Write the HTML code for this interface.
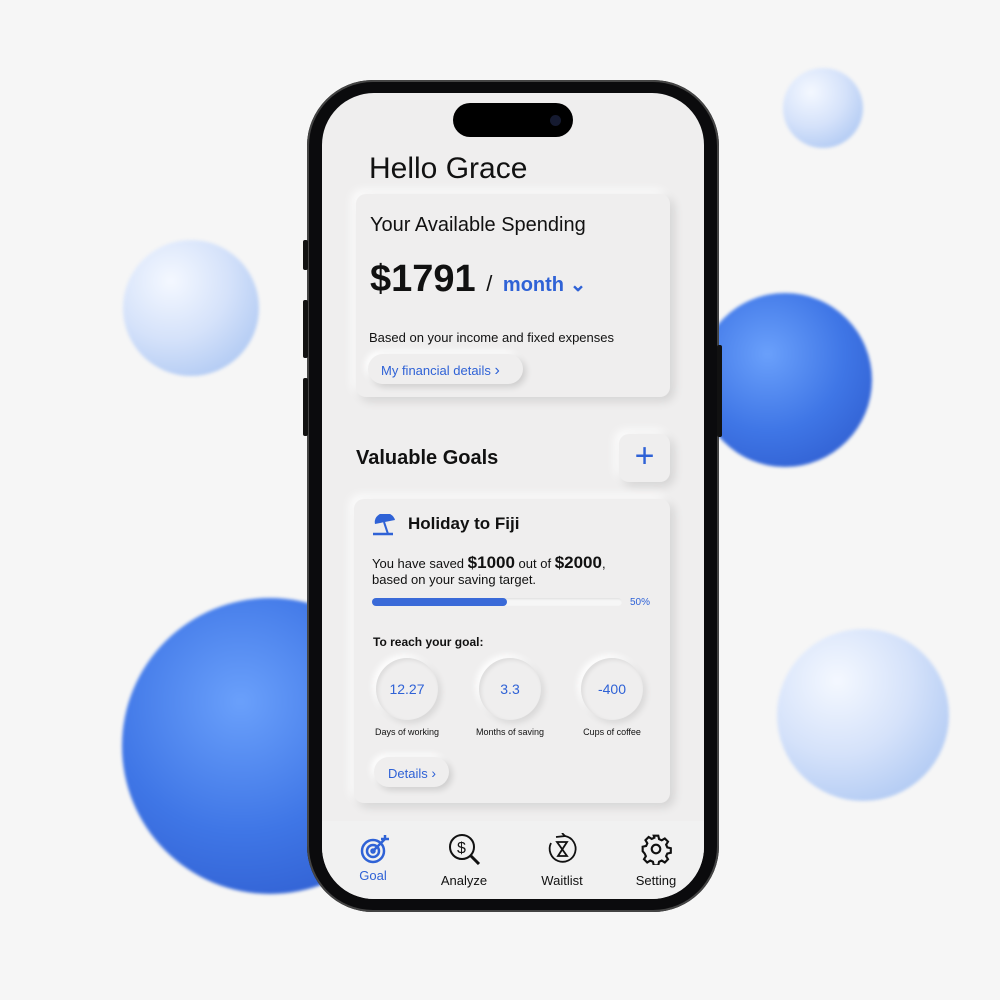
<!DOCTYPE html>
<html><head><style>
*{margin:0;padding:0;box-sizing:border-box}
body{width:1000px;height:1000px;background:#f6f6f6;position:relative;overflow:hidden;font-family:"Liberation Sans",sans-serif;color:#111}
.sp{position:absolute;border-radius:50%;filter:blur(1.5px)}
.lt{background:radial-gradient(circle at 35% 30%,#f4f8ff 0%,#d5e2fa 45%,#9fbef0 100%)}
.bl{background:radial-gradient(circle at 40% 35%,#6aa0fb 0%,#3f76e6 50%,#2a55c8 100%)}
.phone{position:absolute;left:307px;top:80px;width:412px;height:832px;border-radius:66px;background:#0b0b0d;box-shadow:0 0 0 2px #444 inset}
.screen{position:absolute;left:322px;top:93px;width:382px;height:806px;border-radius:52px;background:#efeeee;overflow:hidden}
.island{position:absolute;left:131px;top:10px;width:120px;height:34px;border-radius:17px;background:#000}
.card{position:absolute;background:#efeeee;border-radius:10px;box-shadow:4px 4px 10px rgba(0,0,0,.12),-4px -4px 10px rgba(255,255,255,.9)}
.btn{position:absolute;border-radius:16px;background:#efeeee;box-shadow:3px 3px 7px rgba(0,0,0,.14),-3px -3px 7px #fff;color:#2f62d6;font-size:13px}
.blue{color:#2f62d6}
.circ{position:absolute;width:62px;height:62px;border-radius:50%;box-shadow:inset 2px 2px 4px rgba(0,0,0,.08),3px 3px 7px rgba(0,0,0,.10),-3px -3px 7px #fff;display:flex;align-items:center;justify-content:center;color:#2f62d6;font-size:14px}
.lbl{position:absolute;font-size:9px;width:100px;text-align:center}
.nav{position:absolute;left:0;top:728px;width:382px;height:78px;background:#f1f1f1}
.ni{position:absolute;top:52px;font-size:13px;text-align:center;width:80px}
</style></head><body>
<div class="sp lt" style="left:783px;top:68px;width:80px;height:80px"></div>
<div class="sp lt" style="left:123px;top:240px;width:136px;height:136px"></div>
<div class="sp bl" style="left:698px;top:293px;width:174px;height:174px"></div>
<div class="sp bl" style="left:122px;top:598px;width:296px;height:296px"></div>
<div class="sp lt" style="left:777px;top:629px;width:172px;height:172px"></div>
<div class="phone"></div>
<div style="position:absolute;left:303px;top:240px;width:5px;height:30px;background:#111;border-radius:2px"></div>
<div style="position:absolute;left:303px;top:300px;width:5px;height:58px;background:#111;border-radius:2px"></div>
<div style="position:absolute;left:303px;top:378px;width:5px;height:58px;background:#111;border-radius:2px"></div>
<div style="position:absolute;left:717px;top:345px;width:5px;height:92px;background:#111;border-radius:2px"></div>
<div class="screen">
<div class="island"><div style="position:absolute;right:12px;top:12px;width:11px;height:11px;border-radius:50%;background:#151a30"></div></div>
<div style="position:absolute;left:47px;top:59px;font-size:30px">Hello Grace</div>
<div class="card" style="left:34px;top:101px;width:314px;height:203px">
<div style="position:absolute;left:14px;top:20px;font-size:20px">Your Available Spending</div>
<div style="position:absolute;left:14px;top:64px;font-size:38px;font-weight:bold">$1791 <span style="font-size:22px;font-weight:normal">/</span> <span class="blue" style="font-size:20px;font-weight:bold">month ⌄</span></div>
<div style="position:absolute;left:13px;top:136px;font-size:13px">Based on your income and fixed expenses</div>
<div class="btn" style="left:12px;top:160px;width:155px;height:30px;padding:8px 0 0 13px">My financial details <span style="font-size:16px">›</span></div>
</div>
<div style="position:absolute;left:34px;top:354px;font-size:20px;font-weight:bold">Valuable Goals</div>
<div class="card" style="left:297px;top:341px;width:51px;height:48px;text-align:center;font-size:34px;line-height:44px;color:#2f62d6">+</div>
<div class="card" style="left:32px;top:406px;width:316px;height:304px">
<svg style="position:absolute;left:18px;top:15px" width="28" height="22" viewBox="0 0 28 22"><path d="M3 10 A10 9 0 0 1 23 6 Z" fill="#2f62d6"/><path d="M12 8 L16 20" stroke="#2f62d6" stroke-width="2"/><path d="M1 20 H21" stroke="#2f62d6" stroke-width="2.5"/></svg>
<div style="position:absolute;left:54px;top:15px;font-size:17px;font-weight:bold">Holiday to Fiji</div>
<div style="position:absolute;left:18px;top:56px;font-size:13px;line-height:16px">You have saved <b style="font-size:17px">$1000</b> out of <b style="font-size:17px">$2000</b>,<br>based on your saving target.</div>
<div style="position:absolute;left:18px;top:99px;width:250px;height:8px;border-radius:4px;background:#f6f6f6;box-shadow:inset 1px 1px 2px rgba(0,0,0,.1)"><div style="width:135px;height:8px;border-radius:4px;background:#3a6ad8"></div></div>
<div class="blue" style="position:absolute;left:276px;top:98px;font-size:10px">50%</div>
<div style="position:absolute;left:19px;top:136px;font-size:12px;font-weight:bold">To reach your goal:</div>
<div class="circ" style="left:22px;top:159px">12.27</div>
<div class="circ" style="left:125px;top:159px">3.3</div>
<div class="circ" style="left:227px;top:159px">-400</div>
<div class="lbl" style="left:3px;top:228px">Days of working</div>
<div class="lbl" style="left:106px;top:228px">Months of saving</div>
<div class="lbl" style="left:208px;top:228px">Cups of coffee</div>
<div class="btn" style="left:20px;top:258px;width:75px;height:30px;padding:8px 0 0 14px">Details <span style="font-size:14px">›</span></div>
</div>
<div class="nav">
<svg style="position:absolute;left:37px;top:12px" width="32" height="32" viewBox="0 0 32 32" fill="none" stroke="#2f62d6" stroke-width="2.5"><circle cx="14" cy="18" r="11"/><circle cx="14" cy="18" r="6"/><circle cx="14" cy="18" r="1.5"/><path d="M14 18 L26 6 M22 6 L26 6 L26 2 M26 6 L30 6"/></svg>
<div class="ni blue" style="left:11px;top:47px">Goal</div>
<svg style="position:absolute;left:126px;top:12px" width="34" height="32" viewBox="0 0 34 32" fill="none" stroke="#111" stroke-width="2"><circle cx="14" cy="14" r="12"/><path d="M23 23 L31 31" stroke-width="3"/><text x="9" y="20" font-size="16" fill="#111" stroke="none" font-family="Liberation Sans">$</text></svg>
<div class="ni" style="left:102px">Analyze</div>
<svg style="position:absolute;left:224px;top:12px" width="32" height="32" viewBox="0 0 32 32" fill="none" stroke="#111" stroke-width="1.8"><path d="M19 3 A13 13 0 1 1 5 10"/><path d="M10 4 L19 3 L16 0"/><path d="M11 9 H21 L12 23 H21 L11 9Z"/></svg>
<div class="ni" style="left:200px">Waitlist</div>
<svg style="position:absolute;left:318px;top:12px" width="32" height="32" viewBox="0 0 24 24" fill="none" stroke="#111" stroke-width="1.6"><circle cx="12" cy="12" r="3.2"/><path d="M10.3 2h3.4l.6 2.6 2 .9 2.3-1.4 2.4 2.4-1.4 2.3.9 2 2.6.6v3.4l-2.6.6-.9 2 1.4 2.3-2.4 2.4-2.3-1.4-2 .9-.6 2.6h-3.4l-.6-2.6-2-.9-2.3 1.4-2.4-2.4 1.4-2.3-.9-2L2 13.7v-3.4l2.6-.6.9-2-1.4-2.3 2.4-2.4 2.3 1.4 2-.9z"/></svg>
<div class="ni" style="left:294px">Setting</div>
</div>
</div>
</body></html>
